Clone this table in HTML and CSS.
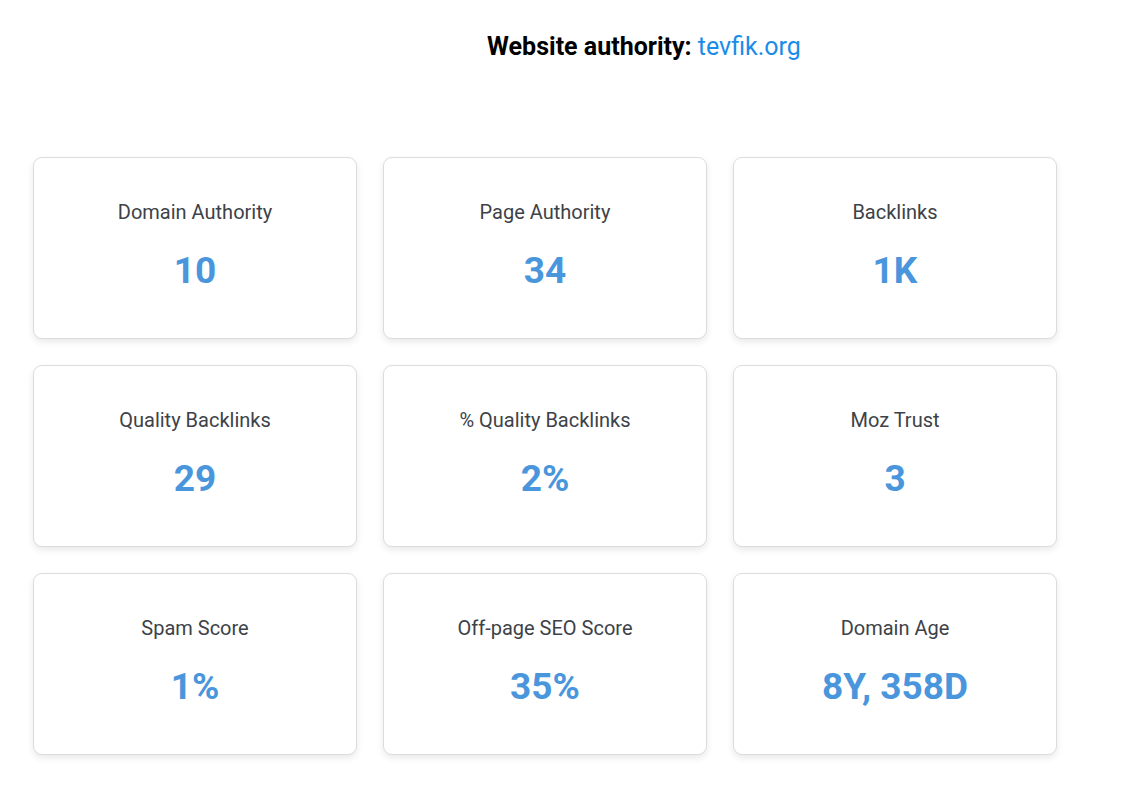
FILE: index.html
```html
<!DOCTYPE html>
<html lang="en">
<head>
<meta charset="utf-8">
<title>Website authority</title>
<link rel="stylesheet" href="styles.css">
</head>
<body>
<header class="header">
  <h1 class="title">Website authority: <a class="site" href="#">tevfik.org</a></h1>
</header>
<main class="grid">
  <div class="card"><div class="label">Domain Authority</div><div class="value">10</div></div>
  <div class="card"><div class="label">Page Authority</div><div class="value">34</div></div>
  <div class="card"><div class="label">Backlinks</div><div class="value">1K</div></div>
  <div class="card"><div class="label">Quality Backlinks</div><div class="value">29</div></div>
  <div class="card"><div class="label">% Quality Backlinks</div><div class="value">2%</div></div>
  <div class="card"><div class="label">Moz Trust</div><div class="value">3</div></div>
  <div class="card"><div class="label">Spam Score</div><div class="value">1%</div></div>
  <div class="card"><div class="label">Off-page SEO Score</div><div class="value">35%</div></div>
  <div class="card"><div class="label">Domain Age</div><div class="value">8Y, 358D</div></div>
</main>
</body>
</html>
```

FILE: styles.css
```css
* { box-sizing: border-box; }
html, body { margin: 0; padding: 0; background: #fff; }
body { font-family: Roboto, "Noto Sans", "Liberation Sans", sans-serif; color: #3c4043; }

.header {
  padding: 32px 0 0 166px;
  text-align: center;
}
.title {
  margin: 0;
  font-size: 25px;
  line-height: 30px;
  font-weight: 700;
  color: #000;
}
.site {
  font-weight: 400;
  color: #1a8ce8;
  text-decoration: none;
}

.grid {
  display: grid;
  grid-template-columns: repeat(3, 324px);
  gap: 26px;
  padding: 95px 0 40px 33px;
}
.card {
  height: 182px;
  border: 1px solid #dcdcdc;
  border-radius: 9px;
  background: #fff;
  box-shadow: 0 3px 7px rgba(0, 0, 0, 0.09);
  padding-top: 42px;
  text-align: center;
}
.label {
  font-size: 20px;
  line-height: 24px;
  color: #3d4248;
}
.value {
  margin-top: 25px;
  font-size: 37px;
  line-height: 44px;
  font-weight: 700;
  color: #4a96dc;
}
```
